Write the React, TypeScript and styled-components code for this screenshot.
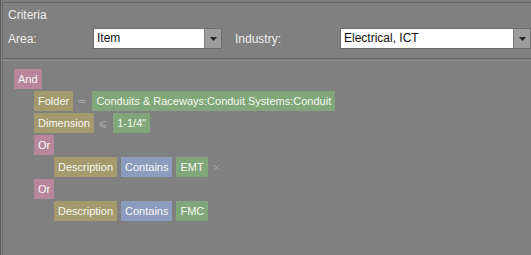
import styled, { createGlobalStyle } from "styled-components";

const GlobalStyle = createGlobalStyle`
  html, body {
    margin: 0;
    padding: 0;
    background: #808080;
  }
  body {
    font-family: Tahoma, "Liberation Sans", sans-serif;
  }
`;

type Kind = "logic" | "field" | "op" | "value";

const chipColors: Record<Kind, string> = {
  logic: "#b7869b",
  field: "#a59a6d",
  op: "#8c9cbf",
  value: "#80a679",
};

function Select({ value, width }: { value: string; width: number }) {
  return (
    <SelectBox style={{ width }}>
      <SelectValue>{value}</SelectValue>
      <SelectButton>
        <svg width="7" height="4" viewBox="0 0 7 4">
          <path d="M0 0h7L3.5 4z" fill="#222" />
        </svg>
      </SelectButton>
    </SelectBox>
  );
}

function App() {
  return (
    <>
      <GlobalStyle />
      <Frame>
        <Header>
          <Title>Criteria</Title>
          <FieldRow>
            <Label $width={85}>Area:</Label>
            <Select value="Item" width={129} />
            <Label $width={105} $indent={13}>
              Industry:
            </Label>
            <Select value="Electrical, ICT" width={191} />
          </FieldRow>
        </Header>
        <Tree>
          <Row $level={0}>
            <Chip $kind="logic">And</Chip>
          </Row>
          <Row $level={1}>
            <Chip $kind="field">Folder</Chip>
            <Operator>=</Operator>
            <Chip $kind="value">Conduits &amp; Raceways:Conduit Systems:Conduit</Chip>
          </Row>
          <Row $level={1}>
            <Chip $kind="field">Dimension</Chip>
            <Operator>⩽</Operator>
            <Chip $kind="value">1-1/4"</Chip>
          </Row>
          <Row $level={1}>
            <Chip $kind="logic">Or</Chip>
          </Row>
          <Row $level={2}>
            <Chip $kind="field">Description</Chip>
            <Chip $kind="op">Contains</Chip>
            <Chip $kind="value">EMT</Chip>
            <Remove>×</Remove>
          </Row>
          <Row $level={1}>
            <Chip $kind="logic">Or</Chip>
          </Row>
          <Row $level={2}>
            <Chip $kind="field">Description</Chip>
            <Chip $kind="op">Contains</Chip>
            <Chip $kind="value">FMC</Chip>
          </Row>
        </Tree>
      </Frame>
    </>
  );
}

const Frame = styled.div`
  width: 531px;
  height: 255px;
  box-sizing: border-box;
  border-left: 1px solid #5e5e5e;
  padding-left: 1px;
  display: flex;
  flex-direction: column;
  background: #808080;
  overflow: hidden;
`;

const Header = styled.section`
  height: 57px;
  box-sizing: border-box;
  margin-top: 2px;
  border-top: 1px solid #666;
  border-left: 1px solid #6a6a6a;
  border-bottom: 1px solid #646464;
  padding: 5px 0 0 5px;
`;

const Title = styled.div`
  font-size: 12px;
  color: #ececec;
  height: 20px;
`;

const FieldRow = styled.div`
  display: flex;
  align-items: center;
`;

const Label = styled.span<{ $width: number; $indent?: number }>`
  width: ${(p) => p.$width}px;
  padding-left: ${(p) => p.$indent ?? 0}px;
  font-size: 12px;
  color: #ececec;
`;

const SelectBox = styled.div`
  height: 21px;
  box-sizing: border-box;
  display: flex;
  border: 1px solid #6c6c6c;
  background: #fff;
`;

const SelectValue = styled.span`
  flex: 1;
  font-size: 12px;
  color: #111;
  line-height: 19px;
  padding-left: 3px;
`;

const SelectButton = styled.span`
  width: 16px;
  display: flex;
  align-items: center;
  justify-content: center;
  background: #9c9c9c;
  border-left: 1px solid #7a7a7a;
`;

const Tree = styled.section`
  flex: 1;
  margin-top: 1px;
  border-top: 1px solid #8c8c8c;
  border-left: 1px solid #6a6a6a;
  padding: 8px 0 0 11px;
  display: flex;
  flex-direction: column;
  gap: 2px;
`;

const Row = styled.div<{ $level: number }>`
  display: flex;
  align-items: center;
  gap: 4px;
  padding-left: ${(p) => p.$level * 20}px;
  height: 20px;
`;

const Chip = styled.span<{ $kind: Kind }>`
  height: 20px;
  line-height: 20px;
  padding: 0 4px;
  font-size: 11px;
  color: #f6f6f2;
  background: ${(p) => chipColors[p.$kind]};
  white-space: nowrap;
`;

const Operator = styled.span`
  font-family: "DejaVu Sans", sans-serif;
  font-size: 11px;
  color: #acacac;
  padding: 0 2px 0 0;
`;

const Remove = styled.span`
  font-size: 13px;
  color: #a0a0a0;
  padding-left: 1px;
`;

export default App;
